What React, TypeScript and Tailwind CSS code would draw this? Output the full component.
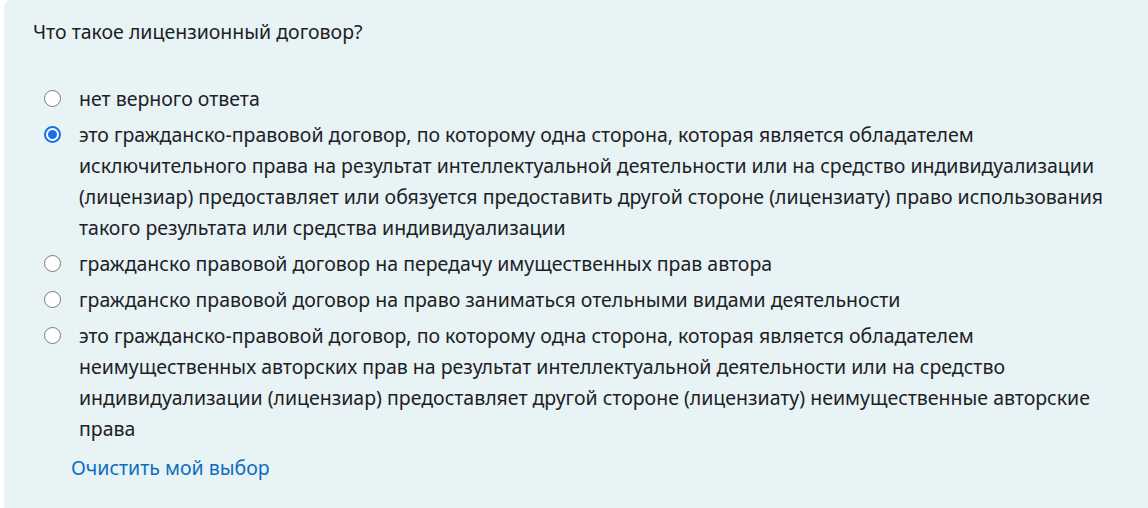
import { useState } from "react";

const options = [
  "нет верного ответа",
  "это гражданско-правовой договор, по которому одна сторона, которая является обладателем исключительного права на результат интеллектуальной деятельности или на средство индивидуализации (лицензиар) предоставляет или обязуется предоставить другой стороне (лицензиату) право использования такого результата или средства индивидуализации",
  "гражданско правовой договор на передачу имущественных прав автора",
  "гражданско правовой договор на право заниматься отельными видами деятельности",
  "это гражданско-правовой договор, по которому одна сторона, которая является обладателем неимущественных авторских прав на результат интеллектуальной деятельности или на средство индивидуализации (лицензиар) предоставляет другой стороне (лицензиату) неимущественные авторские права",
];

function Radio({ checked }: { checked: boolean }) {
  return checked ? (
    <span className="flex h-[17px] w-[17px] items-center justify-center rounded-full border-2 border-[#1a6fe8] bg-white">
      <span className="h-[9px] w-[9px] rounded-full bg-[#1a6fe8]" />
    </span>
  ) : (
    <span className="h-[17px] w-[17px] rounded-full border-[1.5px] border-[#7a7a7a] bg-white" />
  );
}

export default function App() {
  const [selected, setSelected] = useState<number | null>(1);

  return (
    <div
      className="h-[508px] w-[1148px] overflow-hidden bg-white pl-1 text-[#1d2125]"
      style={{ fontFamily: '"Noto Sans", "Open Sans", sans-serif' }}
    >
      <div className="h-full rounded-tl-lg bg-[#e7f3f5] pl-[29px] pt-[17px]">
        <p className="text-[19.5px] leading-[30px]">Что такое лицензионный договор?</p>

        <div className="mt-[36px] flex w-[1085px] flex-col gap-[5px] pl-[11px]">
          {options.map((opt, i) => (
            <label
              key={i}
              className="flex cursor-pointer items-start gap-[18px] text-[19.5px] leading-[31px]"
              onClick={() => setSelected(i)}
            >
              <span className="flex h-[31px] w-[17px] shrink-0 items-center">
                <Radio checked={selected === i} />
              </span>
              <span>{opt}</span>
            </label>
          ))}
        </div>

        <button
          className="ml-[38px] mt-[8px] text-[19.5px] leading-[31px] text-[#0f6cbf] hover:underline"
          onClick={() => setSelected(null)}
        >
          Очистить мой выбор
        </button>
      </div>
    </div>
  );
}
